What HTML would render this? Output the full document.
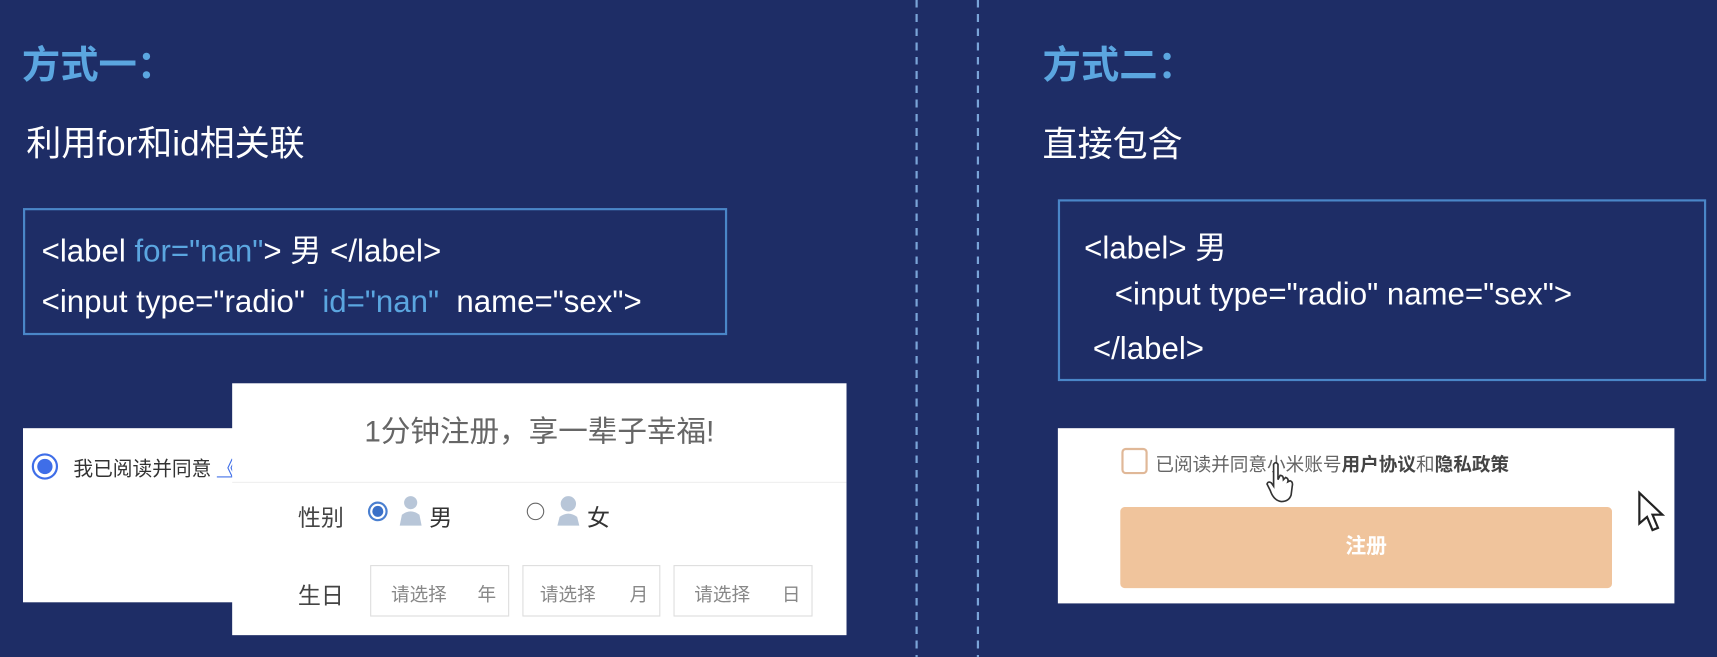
<!DOCTYPE html>
<html><head><meta charset="utf-8"><style>
*{margin:0;padding:0;box-sizing:border-box}
body{width:1717px;height:645px;background:#1e2d66;overflow:hidden;font-family:"Liberation Sans","Noto Sans CJK SC",sans-serif;color:#fff}
#w{position:absolute;left:0;top:0;width:1568px;height:590px;transform:scale(1.0951);transform-origin:0 0}
.a{position:absolute;white-space:nowrap}
.t{font-size:35px;font-weight:bold;color:#5ba6e0}
.s{font-size:32px}
.box{position:absolute;border:2px solid #4a86c8}
.code{font-size:28.5px;position:absolute;white-space:nowrap}
.b{color:#5ba6e0}
.dash{position:absolute;top:0;width:2px;height:600px;background:repeating-linear-gradient(#7aa4d8 0 7px,transparent 7px 13px)}
.card{position:absolute;background:#fff}
.g{color:#555}
.inp{position:absolute;top:516px;height:47px;border:1px solid #ddd;font-size:17px;color:#888}
</style></head><body><div id="w">
<div class="dash" style="left:836px"></div>
<div class="dash" style="left:892px"></div>

<div class="a t" style="left:20px;top:31px">方式一：</div>
<div class="a s" style="left:24px;top:106px">利用for和id相关联</div>
<div class="box" style="left:21px;top:190px;width:643px;height:116px"></div>
<div class="code" style="left:38px;top:207px">&lt;label <span class="b">for="nan"</span>&gt; 男 &lt;/label&gt;</div>
<div class="code" style="left:38px;top:260px">&lt;input type="radio" &nbsp;<span class="b">id="nan"</span> &nbsp;name="sex"&gt;</div>

<div class="a t" style="left:952px;top:31px">方式二：</div>
<div class="a s" style="left:952px;top:107px">直接包含</div>
<div class="box" style="left:966px;top:182px;width:592px;height:166px"></div>
<div class="code" style="left:990px;top:204px">&lt;label&gt; 男</div>
<div class="code" style="left:1018px;top:253px">&lt;input type="radio" name="sex"&gt;</div>
<div class="code" style="left:998px;top:303px">&lt;/label&gt;</div>

<div class="card" style="left:21px;top:391px;width:200px;height:159px">
<div class="a" style="left:8px;top:23px;width:24px;height:24px;border-radius:50%;border:2px solid #3f6ee8;background:#fff"><div style="margin:3px;width:14px;height:14px;border-radius:50%;background:#3f6ee8"></div></div>
<div class="a g" style="left:46px;top:23px;font-size:18px;color:#333">我已阅读并同意 <u style="color:#3f6ee8">《</u></div>
</div>
<div class="card" style="left:212px;top:350px;width:561px;height:230px">
<div class="a" style="left:0;width:561px;text-align:center;top:22px;font-size:27px;color:#666">1分钟注册，享一辈子幸福!</div>
<div class="a" style="left:0;top:90px;width:561px;height:1px;background:#f0f0f0"></div>
<div class="a" style="left:60px;top:107px;font-size:21px;color:#444">性别</div>
<div class="a" style="left:124px;top:108px;width:18px;height:18px;border-radius:50%;border:2px solid #4a7fd0"><div style="margin:2px;width:10px;height:10px;border-radius:50%;background:#3a70c8"></div></div>
<svg class="a" style="left:151px;top:100px" width="24" height="34"><circle cx="12" cy="9" r="6" fill="#b8c6d8"/><path d="M2 30 L4 20 Q12 14 20 20 L22 30Z" fill="#b8c6d8"/></svg>
<div class="a" style="left:180px;top:107px;font-size:21px;color:#333">男</div>
<div class="a" style="left:269px;top:109px;width:16px;height:16px;border-radius:50%;border:1.5px solid #666"></div>
<svg class="a" style="left:295px;top:100px" width="24" height="34"><circle cx="12" cy="10" r="7" fill="#b8c6d8"/><path d="M2 30 L4 22 Q12 16 20 22 L22 30Z" fill="#b8c6d8"/></svg>
<div class="a" style="left:324px;top:107px;font-size:21px;color:#333">女</div>
<div class="a" style="left:60px;top:178px;font-size:21px;color:#444">生日</div>
</div>
<div class="inp" style="left:338px;width:127px"><span class="a" style="left:18px;top:12px">请选择</span><span class="a" style="left:97px;top:12px">年</span></div>
<div class="inp" style="left:477px;width:126px"><span class="a" style="left:15px;top:12px">请选择</span><span class="a" style="left:97px;top:12px">月</span></div>
<div class="inp" style="left:615px;width:127px"><span class="a" style="left:18px;top:12px">请选择</span><span class="a" style="left:98px;top:12px">日</span></div>

<div class="card" style="left:966px;top:391px;width:563px;height:160px">
<div class="a" style="left:58px;top:18px;width:24px;height:24px;border:2px solid #e0b898;border-radius:4px"></div>
<div class="a" style="left:89px;top:19px;font-size:17px;color:#666">已阅读并同意小米账号<b style="color:#444">用户协议</b>和<b style="color:#444">隐私政策</b></div>
<div class="a" style="left:57px;top:72px;width:449px;height:74px;background:#f0c49c;border-radius:4px;color:#fff;font-weight:bold;font-size:19px;text-align:center;line-height:74px">注册</div>
</div>
<svg class="a" style="left:1155px;top:420px" width="28" height="42"><path d="M8 4 Q10 1 12 4 L12 18 L14 14 Q17 14 17 18 L19 16 Q22 17 21 20 L23 19 Q26 20 25 24 L24 32 Q22 38 15 38 Q8 37 5 28 L2 22 Q3 19 6 21 L8 24Z" fill="#fff" stroke="#333" stroke-width="1.5"/></svg>
<svg class="a" style="left:1495px;top:448px" width="28" height="40"><path d="M2 2 L2 30 L9 24 L14 36 L19 34 L14 22 L23 22Z" fill="#fff" stroke="#222" stroke-width="2"/></svg>
</div></body></html>
